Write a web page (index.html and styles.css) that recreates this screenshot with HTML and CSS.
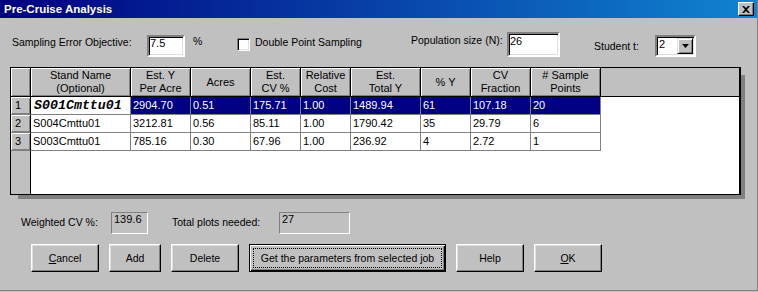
FILE: index.html
```html
<!DOCTYPE html>
<html>
<head>
    <title>Pre-Cruise Analysis</title>
    <link rel="stylesheet" href="styles.css">
</head>
<body>
<div class="dialog">
    <div class="titlebar">
        <span class="title">Pre-Cruise Analysis</span>
        <span class="close">
            <svg width="8" height="7" viewBox="0 0 8 7"><path d="M0 0h2l2 2 2-2h2L5 3.5 8 7H6L4 5 2 7H0L3 3.5z" fill="#000"/></svg>
        </span>
    </div>

    <div class="params">
        <span class="lbl sampling-lbl">Sampling Error Objective:</span>
        <span class="field sampling-field">7.5</span>
        <span class="lbl pct-lbl">%</span>
        <span class="check"></span>
        <span class="lbl double-lbl">Double Point Sampling</span>
        <span class="lbl pop-lbl">Population size (N):</span>
        <span class="field pop-field">26</span>
        <span class="lbl student-lbl">Student t:</span>
        <span class="select">
            <span class="select-value">2</span>
            <span class="drop">
                <svg width="7" height="4" viewBox="0 0 7 4"><path d="M0 0h7L3.5 4z" fill="#000"/></svg>
            </span>
        </span>
    </div>

    <div class="grid">
        <div class="hd corner"></div>
        <div class="hd">Stand Name<br>(Optional)</div>
        <div class="hd">Est. Y<br>Per Acre</div>
        <div class="hd">Acres</div>
        <div class="hd">Est.<br>CV %</div>
        <div class="hd">Relative<br>Cost</div>
        <div class="hd">Est.<br>Total Y</div>
        <div class="hd">% Y</div>
        <div class="hd">CV<br>Fraction</div>
        <div class="hd"># Sample<br>Points</div>
        <div class="hd-fill"></div>

        <div class="rs">1</div>
        <div class="cell name-edit">S001Cmttu01</div>
        <div class="cell sel">2904.70</div>
        <div class="cell sel">0.51</div>
        <div class="cell sel">175.71</div>
        <div class="cell sel">1.00</div>
        <div class="cell sel">1489.94</div>
        <div class="cell sel">61</div>
        <div class="cell sel">107.18</div>
        <div class="cell sel">20</div>
        <div class="row-fill"></div>

        <div class="rs">2</div>
        <div class="cell">S004Cmttu01</div>
        <div class="cell">3212.81</div>
        <div class="cell">0.56</div>
        <div class="cell">85.11</div>
        <div class="cell">1.00</div>
        <div class="cell">1790.42</div>
        <div class="cell">35</div>
        <div class="cell">29.79</div>
        <div class="cell">6</div>
        <div class="row-fill"></div>

        <div class="rs">3</div>
        <div class="cell">S003Cmttu01</div>
        <div class="cell">785.16</div>
        <div class="cell">0.30</div>
        <div class="cell">67.96</div>
        <div class="cell">1.00</div>
        <div class="cell">236.92</div>
        <div class="cell">4</div>
        <div class="cell">2.72</div>
        <div class="cell">1</div>
        <div class="row-fill"></div>

        <div class="rs-empty"></div>
        <div class="empty"></div>
    </div>

    <div class="totals">
        <span class="lbl cv-lbl">Weighted CV %:</span>
        <span class="readonly cv-box">139.6</span>
        <span class="lbl plots-lbl">Total plots needed:</span>
        <span class="readonly plots-box">27</span>
    </div>

    <div class="buttons">
        <button class="btn w68"><span><u>C</u>ancel</span></button>
        <button class="btn w52"><span>Add</span></button>
        <button class="btn w68"><span>Delete</span></button>
        <button class="btn default"><span>Get the parameters from selected job</span></button>
        <button class="btn w68"><span>Help</span></button>
        <button class="btn w68"><span><u>O</u>K</span></button>
    </div>
</div>
</body>
</html>
```

FILE: styles.css
```css
* {
    box-sizing: border-box;
}

body {
    margin: 0;
    background-color: #c0c0c0;
    font-family: "Liberation Sans", Arial, sans-serif;
    font-size: 11px;
    color: #000;
}

.dialog {
    width: 758px;
    height: 291px;
    border-right: 1px solid #808080;
    border-bottom: 1px solid #808080;
}

/* title bar */
.titlebar {
    height: 18px;
    display: flex;
    align-items: center;
    justify-content: space-between;
    padding: 0 3px 0 4px;
    background: linear-gradient(90deg, #000080, #1084d0);
}

.title {
    color: #fff;
    font-weight: bold;
    font-size: 11.5px;
}

.close {
    width: 16px;
    height: 14px;
    display: flex;
    align-items: center;
    justify-content: center;
    background-color: #c0c0c0;
    border: 1px solid;
    border-color: #fff #000 #000 #fff;
    box-shadow: inset -1px -1px #808080;
}

/* parameter row */
.params {
    display: flex;
    align-items: flex-start;
    height: 39px;
    padding: 9px 0 0 12px;
}

.lbl {
    font-size: 10.5px;
    line-height: 13px;
    white-space: nowrap;
}

.field {
    background-color: #fff;
    border: 2px solid;
    border-color: #808080 #fff #fff #808080;
    box-shadow: inset 1px 1px #000, inset -1px -1px #dfdfdf;
    line-height: 13px;
}

.sampling-lbl {
    width: 135px;
    margin-top: 9px;
}

.sampling-field {
    width: 38px;
    height: 22px;
    margin-top: 8px;
    padding: 0 1px;
}

.pct-lbl {
    width: 44px;
    margin: 8px 0 0 8px;
}

.check {
    width: 13px;
    height: 13px;
    margin-top: 11px;
    background-color: #fff;
    border: 1px solid;
    border-color: #808080 #fff #fff #808080;
    box-shadow: inset 1px 1px #000, inset -1px -1px #dfdfdf;
}

.double-lbl {
    width: 156px;
    margin: 9px 0 0 5px;
}

.pop-lbl {
    width: 96px;
    margin-top: 7px;
}

.pop-field {
    width: 53px;
    height: 25px;
    margin-top: 5px;
    padding: 1px 0 0 1px;
}

.student-lbl {
    width: 61px;
    margin: 13px 0 0 34px;
}

.select {
    width: 41px;
    height: 22px;
    margin-top: 8px;
    display: flex;
    background-color: #fff;
    border: 2px solid;
    border-color: #808080 #fff #fff #808080;
    box-shadow: inset 1px 1px #000, inset -1px -1px #dfdfdf;
}

.select-value {
    flex: 1;
    padding: 1px 0 0 2px;
    line-height: 13px;
}

.drop {
    width: 16px;
    margin: 1px 1px 1px 0;
    display: flex;
    align-items: center;
    justify-content: center;
    background-color: #c0c0c0;
    border: 1px solid;
    border-color: #dfdfdf #000 #000 #dfdfdf;
    box-shadow: inset 1px 1px #fff, inset -1px -1px #808080;
}

/* grid */
.grid {
    width: 731px;
    height: 128px;
    margin: 10px 0 0 10px;
    display: grid;
    grid-template-columns: 20px 100px 60px 60px 50px 50px 70px 50px 60px 70px 1fr;
    grid-template-rows: 29px 18px 18px 18px 1fr;
    background-color: #fff;
    border: 1px solid #000;
    border-right-width: 2px;
    box-shadow: 6px 6px 0 -2px #808080;
}

.hd {
    display: flex;
    align-items: center;
    justify-content: center;
    text-align: center;
    line-height: 13px;
    background-color: #c0c0c0;
    border-right: 1px solid #000;
    border-bottom: 1px solid #000;
    box-shadow: inset 1px 1px #fff, inset -1px -1px #808080;
}

.hd-fill {
    background-color: #c0c0c0;
    border-bottom: 1px solid #000;
}

.rs {
    padding-left: 4px;
    line-height: 17px;
    background-color: #c0c0c0;
    border-right: 1px solid #000;
    border-bottom: 1px solid #808080;
    box-shadow: inset 1px 1px #fff, inset -1px -1px #808080;
}

.cell {
    padding-left: 2px;
    line-height: 17px;
    white-space: nowrap;
    overflow: hidden;
    border-right: 1px solid #808080;
    border-bottom: 1px solid #808080;
}

.cell.sel {
    background-color: #000080;
    color: #fff;
}

.name-edit {
    padding-left: 3px;
    font-family: "Liberation Mono", "Courier New", monospace;
    font-size: 13.3px;
    font-weight: bold;
    font-style: italic;
}

.rs-empty {
    background-color: #c0c0c0;
    border-right: 1px solid #000;
}

.empty {
    grid-column: 2 / -1;
}

/* totals */
.totals {
    display: flex;
    align-items: flex-start;
    height: 22px;
    margin-top: 17px;
    padding-left: 21px;
}

.cv-lbl {
    width: 90px;
    margin-top: 4px;
}

.plots-lbl {
    width: 107px;
    margin: 4px 0 0 24px;
}

.readonly {
    height: 22px;
    padding: 0 2px;
    line-height: 13px;
    border: 1px solid;
    border-color: #808080 #fff #fff #808080;
}

.cv-box {
    width: 37px;
}

.plots-box {
    width: 71px;
}

/* buttons */
.buttons {
    display: flex;
    gap: 10px;
    margin-top: 10px;
    padding-left: 31px;
}

.btn {
    height: 28px;
    padding: 0;
    display: flex;
    align-items: center;
    justify-content: center;
    font-family: "Liberation Sans", Arial, sans-serif;
    font-size: 10.5px;
    color: #000;
    background-color: #c0c0c0;
    border: 1px solid;
    border-color: #fff #000 #000 #fff;
    box-shadow: inset -1px -1px #808080, inset 1px 1px #dfdfdf;
}

.btn u {
    text-underline-offset: 1px;
}

.w68 {
    width: 68px;
}

.w52 {
    width: 52px;
}

.btn.default {
    width: 197px;
    padding: 3px;
    align-items: stretch;
    border-color: #000;
    box-shadow: inset 1px 1px #fff, inset -1px -1px #000, inset -2px -2px #808080;
}

.btn.default span {
    flex: 1;
    display: flex;
    align-items: center;
    justify-content: center;
    border: 1px dotted #000;
}
```
